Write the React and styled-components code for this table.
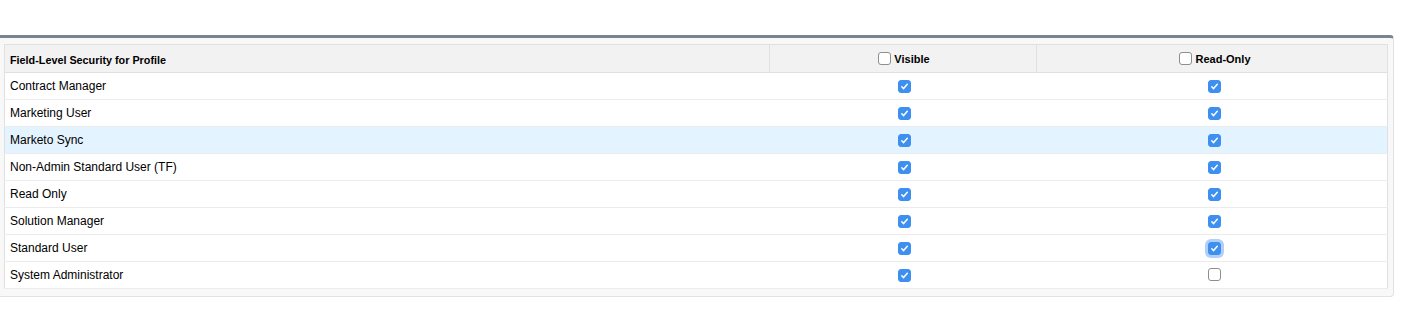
import React from 'react'
import styled, { createGlobalStyle } from 'styled-components'

const GlobalStyle = createGlobalStyle`
  body {
    margin: 0;
    background: #ffffff;
    font-family: "Liberation Sans", Arial, sans-serif;
  }
`

const profiles = [
  { name: 'Contract Manager', visible: true, readOnly: true },
  { name: 'Marketing User', visible: true, readOnly: true },
  { name: 'Marketo Sync', visible: true, readOnly: true, highlight: true },
  { name: 'Non-Admin Standard User (TF)', visible: true, readOnly: true },
  { name: 'Read Only', visible: true, readOnly: true },
  { name: 'Solution Manager', visible: true, readOnly: true },
  { name: 'Standard User', visible: true, readOnly: true, focused: true },
  { name: 'System Administrator', visible: true, readOnly: false }
]

const Check = ({ checked, focused }) => (
  <Check.Box $checked={checked} $focused={focused}>
    {checked && (
      <svg width="9" height="9" viewBox="0 0 9 9">
        <path d="M1.8 4.8 L3.6 6.6 L7.3 2.2" fill="none" stroke="#fff" strokeWidth="1.5" strokeLinecap="round" strokeLinejoin="round" />
      </svg>
    )}
  </Check.Box>
)

Check.Box = styled.span`
  display: inline-flex;
  align-items: center;
  justify-content: center;
  box-sizing: border-box;
  width: 13px;
  height: 13px;
  border-radius: 3px;
  background: ${p => (p.$checked ? '#3d8ff0' : '#ffffff')};
  border: 1px solid ${p => (p.$checked ? '#3d8ff0' : '#8e8e8e')};
  box-shadow: ${p => (p.$focused ? '0 0 0 3px rgba(80, 150, 240, 0.45)' : 'none')};
`

const App = () => (
  <>
    <GlobalStyle />
    <Page>
      <Panel>
        <Table>
          <thead>
            <tr>
              <HeadCell $width={765}>Field-Level Security for Profile</HeadCell>
              <HeadCell $width={267} $center $shift={1}>
                <HeadLabel><Check />Visible</HeadLabel>
              </HeadCell>
              <HeadCell $center $last $shift={3}>
                <HeadLabel><Check />Read-Only</HeadLabel>
              </HeadCell>
            </tr>
          </thead>
          <tbody>
            {profiles.map(p => (
              <Row key={p.name} $highlight={p.highlight}>
                <Cell>{p.name}</Cell>
                <Cell $center $shift={1}><Check checked={p.visible} /></Cell>
                <Cell $center $shift={3}><Check checked={p.readOnly} focused={p.focused} /></Cell>
              </Row>
            ))}
          </tbody>
        </Table>
      </Panel>
    </Page>
  </>
)

const Page = styled.div`
  padding-top: 35px;
  width: 1401px;
  height: 317px;
  box-sizing: border-box;
`

const Panel = styled.div`
  width: 1394px;
  box-sizing: border-box;
  background: #f8f8f8;
  border-top: 3px solid #7b838f;
  border-right: 1px solid #e2e2e2;
  border-bottom: 1px solid #e2e2e2;
  border-radius: 0 4px 4px 0;
  padding: 6px 5px 7px 4px;
`

const Table = styled.table`
  width: 1384px;
  border-collapse: collapse;
  background: #ffffff;
  border: 1px solid #e0e0e0;
  table-layout: fixed;
`

const HeadCell = styled.th`
  width: ${p => (p.$width ? `${p.$width}px` : 'auto')};
  height: 28px;
  box-sizing: border-box;
  padding: 2px 5px 0 ${p => 5 + (p.$shift || 0) * 2}px;
  background: #f2f2f2;
  border-bottom: 1px solid #e0e0e0;
  border-right: ${p => (p.$last ? 'none' : '1px solid #e0e0e0')};
  text-align: ${p => (p.$center ? 'center' : 'left')};
  font-size: 10.8px;
  font-weight: bold;
  color: #000;
  vertical-align: middle;
`

const HeadLabel = styled.span`
  display: inline-flex;
  align-items: center;
  gap: 3px;
  font-size: 11px;
`

const Row = styled.tr`
  background: ${p => (p.$highlight ? '#e3f3ff' : '#ffffff')};
  border-bottom: 1px solid #ececec;
`

const Cell = styled.td`
  height: 27px;
  box-sizing: border-box;
  padding: 0 5px 0 ${p => 5 + (p.$shift || 0) * 2}px;
  font-size: 12px;
  color: #000;
  text-align: ${p => (p.$center ? 'center' : 'left')};
  vertical-align: middle;
  line-height: 1;
`

export default App
